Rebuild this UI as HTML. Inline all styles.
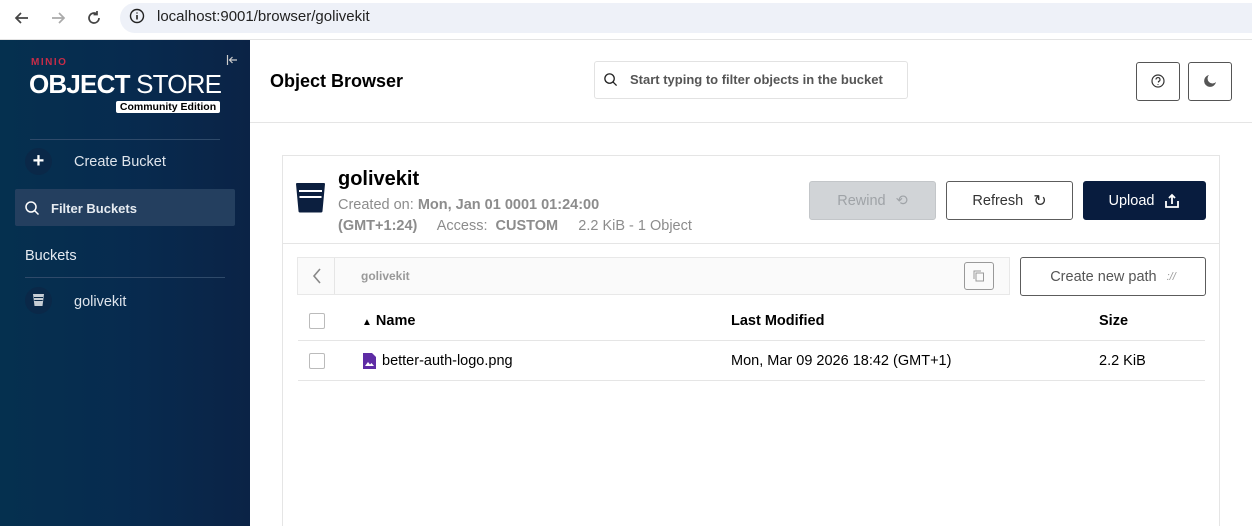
<!DOCTYPE html>
<html><head><meta charset="utf-8"><style>
*{box-sizing:border-box;margin:0;padding:0}
html,body{width:1252px;height:526px;overflow:hidden}
body{font-family:"Liberation Sans",Arial,sans-serif;background:#fff;position:relative;color:#000}
.abs{position:absolute}
.topbar{left:0;top:0;width:1252px;height:40px;background:#fff;border-bottom:1px solid #e3e3e3}
.url{left:120px;top:3px;width:1132px;height:30px;background:#eef1f8;border-radius:15px 0 0 15px}
.side{left:0;top:40px;width:250px;height:486px;background:linear-gradient(90deg,#05304f 0%,#072b4f 50%,#0b2346 100%)}
.w{color:#fff}
.btn{position:absolute;border:1px solid #5c5c5c;border-radius:3px;font-size:14.5px;display:flex;align-items:center;justify-content:center;gap:10px;color:#333}
.gray{color:#8c8c8c}
</style></head><body>
<div class="abs topbar">
 <svg class="abs" style="left:12px;top:8px" width="20" height="20" viewBox="0 0 20 20"><path d="M16 10H4M9 5l-5 5 5 5" stroke="#444" stroke-width="1.7" fill="none"/></svg>
 <svg class="abs" style="left:48px;top:8px" width="20" height="20" viewBox="0 0 20 20"><path d="M4 10h12M11 5l5 5-5 5" stroke="#aaa" stroke-width="1.7" fill="none"/></svg>
 <svg class="abs" style="left:84px;top:8px" width="20" height="20" viewBox="0 0 20 20"><path d="M15 10a5 5 0 1 1-2-4M13 3v3.5h-3.5" stroke="#444" stroke-width="1.7" fill="none"/></svg>
 <div class="abs url"></div>
 <svg class="abs" style="left:129px;top:8px" width="16" height="16" viewBox="0 0 16 16"><circle cx="8" cy="8" r="6.5" stroke="#222" stroke-width="1.4" fill="none"/><path d="M8 7v4.5M8 4.5v1" stroke="#222" stroke-width="1.6"/></svg>
 <div class="abs" style="left:157px;top:8px;font-size:15px;color:#222">localhost:9001/browser/golivekit</div>
</div>
<div class="abs side">
 <div class="abs" style="left:31px;top:17px;font-size:10px;font-weight:bold;color:#c72c48;letter-spacing:1.5px">MINIO</div>
 <div class="abs w" style="left:29px;top:29px;font-size:26px;letter-spacing:-0.8px;white-space:nowrap"><b>OBJECT</b> STORE</div>
 <div class="abs" style="left:116px;top:61px;width:104px;background:#fff;color:#000;font-size:10.5px;text-align:center;border-radius:2px;line-height:12px;font-weight:bold">Community Edition</div>
 <svg class="abs" style="left:226px;top:14px" width="12" height="12" viewBox="0 0 12 12"><path d="M1.5 1v10M11 6H3.5M6.5 3l-3 3 3 3" stroke="#ccc" stroke-width="1.2" fill="none"/></svg>
 <div class="abs" style="left:30px;top:99px;width:190px;height:1px;background:#2f4a6a"></div>
 <div class="abs" style="left:25px;top:108px;width:27px;height:27px;border-radius:50%;background:#0a2848;color:#fff;font-size:20px;font-weight:bold;text-align:center;line-height:26px">+</div>
 <div class="abs" style="left:74px;top:114px;font-size:14.5px;color:#dfe5ec">Create Bucket</div>
 <div class="abs" style="left:15px;top:149px;width:220px;height:37px;background:#243f5f;border-radius:2px"></div>
 <svg class="abs" style="left:24px;top:160px" width="16" height="16" viewBox="0 0 16 16"><circle cx="7" cy="7" r="5" stroke="#fff" stroke-width="1.5" fill="none"/><path d="M10.5 10.5l4 4" stroke="#fff" stroke-width="1.5"/></svg>
 <div class="abs" style="left:51px;top:161px;font-size:13px;font-weight:bold;color:#e6ebf1">Filter Buckets</div>
 <div class="abs" style="left:25px;top:208px;font-size:14.5px;color:#e6ebf1">Buckets</div>
 <div class="abs" style="left:25px;top:237px;width:200px;height:1px;background:#2f4a6a"></div>
 <div class="abs" style="left:25px;top:247px;width:27px;height:27px;border-radius:50%;background:#0a2848"></div>
 <svg class="abs" style="left:33px;top:254px" width="11" height="12" viewBox="0 0 11 12"><path d="M0 0h11l-1.5 12h-8z" fill="#c7cdd4"/><path d="M1 3.5h9M1.3 6.5h8.4" stroke="#0a2848" stroke-width="1"/></svg>
 <div class="abs" style="left:74px;top:254px;font-size:14.5px;color:#dfe5ec">golivekit</div>
</div>
<div class="abs" style="left:270px;top:71px;font-size:18px;font-weight:bold">Object Browser</div>
<div class="abs" style="left:594px;top:61px;width:314px;height:38px;border:1px solid #e2e2e2;border-radius:3px"></div>
<svg class="abs" style="left:603px;top:72px" width="15" height="15" viewBox="0 0 16 16"><circle cx="7" cy="7" r="5" stroke="#222" stroke-width="1.4" fill="none"/><path d="M10.5 10.5l4 4" stroke="#222" stroke-width="1.4"/></svg>
<div class="abs" style="left:630px;top:72px;font-size:13px;font-weight:bold;color:#555">Start typing to filter objects in the bucket</div>
<div class="abs" style="left:1136px;top:62px;width:44px;height:39px;border:1px solid #555;border-radius:3px"></div>
<svg class="abs" style="left:1151px;top:74px" width="14" height="14" viewBox="0 0 14 14"><circle cx="7" cy="7" r="6" stroke="#333" stroke-width="1.2" fill="none"/><path d="M5 5.5a2 2 0 1 1 2.5 2v1M7 10v.8" stroke="#333" stroke-width="1.2" fill="none"/></svg>
<div class="abs" style="left:1188px;top:62px;width:44px;height:39px;border:1px solid #555;border-radius:3px"></div>
<svg class="abs" style="left:1203px;top:74px" width="14" height="14" viewBox="0 0 14 14"><path d="M6 1a6 6 0 1 0 7 7A4.8 4.8 0 0 1 6 1z" fill="#555"/></svg>
<div class="abs" style="left:250px;top:122px;width:1002px;height:1px;background:#e5e5e5"></div>
<div class="abs" style="left:282px;top:155px;width:938px;height:371px;border:1px solid #e5e5e5;border-bottom:none"></div>
<div class="abs" style="left:283px;top:243px;width:936px;height:1px;background:#e5e5e5"></div>
<svg class="abs" style="left:296px;top:183px" width="30" height="30" viewBox="0 0 30 30"><path d="M0 1q0-1 1-1h27q1 0 1 1l-2.5 27q0 1.5-1.5 1.5h-21q-1.5 0-1.5-1.5z" fill="#0c1f3f"/><path d="M3 8h23M3.5 14h22" stroke="#fff" stroke-width="2"/></svg>
<div class="abs" style="left:338px;top:168px;font-size:20px;font-weight:bold">golivekit</div>
<div class="abs gray" style="left:338px;top:197px;font-size:14.5px;white-space:nowrap">Created on: <b>Mon, Jan 01 0001 01:24:00</b></div>
<div class="abs gray" style="left:338px;top:218px;font-size:14.5px;white-space:nowrap"><b>(GMT+1:24)</b>&nbsp;&nbsp;&nbsp;&nbsp; Access:&nbsp; <b>CUSTOM</b>&nbsp;&nbsp;&nbsp;&nbsp; 2.2 KiB - 1 Object</div>
<div class="btn" style="left:809px;top:181px;width:127px;height:39px;background:#d1d4d7;border-color:#c3c6c9;color:#9fa3a7">Rewind <span>⟲</span></div>
<div class="btn" style="left:946px;top:181px;width:127px;height:39px">Refresh <span style="font-size:16px">↻</span></div>
<div class="btn" style="left:1083px;top:181px;width:123px;height:39px;background:#081c3e;border-color:#081c3e;color:#fff">Upload
<svg width="16" height="16" viewBox="0 0 16 16"><path d="M8 11V2M5 5l3-3 3 3M2 8v6h12V8" stroke="#fff" stroke-width="1.8" fill="none"/></svg></div>
<div class="abs" style="left:297px;top:257px;width:713px;height:38px;background:#fafafa;border:1px solid #e8e8e8"></div>
<div class="abs" style="left:334px;top:258px;width:1px;height:36px;background:#e5e5e5"></div>
<svg class="abs" style="left:311px;top:267px" width="12" height="18" viewBox="0 0 12 18"><path d="M9 2L3 9l6 7" stroke="#888" stroke-width="1.6" fill="none"/></svg>
<div class="abs" style="left:361px;top:269px;font-size:12px;font-weight:bold;color:#999">golivekit</div>
<div class="abs" style="left:964px;top:262px;width:30px;height:28px;border:1px solid #999;border-radius:3px"></div>
<svg class="abs" style="left:973px;top:270px" width="12" height="12" viewBox="0 0 12 12"><rect x="3" y="3" width="7.5" height="8" stroke="#999" fill="none"/><path d="M1 9V1h7" stroke="#999" fill="none"/></svg>
<div class="btn" style="left:1020px;top:257px;width:186px;height:39px;color:#555">Create new path <span style="font-size:11px;color:#999;font-style:italic">://</span></div>
<div class="abs" style="left:309px;top:313px;width:16px;height:16px;border:1px solid #bbb;border-radius:2px"></div>
<div class="abs" style="left:362px;top:313px;font-size:14.5px;font-weight:bold"><span style="font-size:10px">▲</span> Name</div>
<div class="abs" style="left:731px;top:313px;font-size:14.5px;font-weight:bold">Last Modified</div>
<div class="abs" style="left:1099px;top:313px;font-size:14.5px;font-weight:bold">Size</div>
<div class="abs" style="left:298px;top:340px;width:907px;height:1px;background:#e5e5e5"></div>
<div class="abs" style="left:309px;top:353px;width:16px;height:16px;border:1px solid #bbb;border-radius:2px"></div>
<svg class="abs" style="left:363px;top:353px" width="13" height="16" viewBox="0 0 13 16"><path d="M0 0h9l4 4v12H0z" fill="#5e2ca5"/><path d="M2 13l3-4 2 2.5 1.5-1.5L11 13z" fill="#fff"/></svg>
<div class="abs" style="left:382px;top:353px;font-size:14.5px">better-auth-logo.png</div>
<div class="abs" style="left:731px;top:353px;font-size:14.5px">Mon, Mar 09 2026 18:42 (GMT+1)</div>
<div class="abs" style="left:1099px;top:353px;font-size:14.5px">2.2 KiB</div>
<div class="abs" style="left:298px;top:380px;width:907px;height:1px;background:#e5e5e5"></div>
</body></html>
